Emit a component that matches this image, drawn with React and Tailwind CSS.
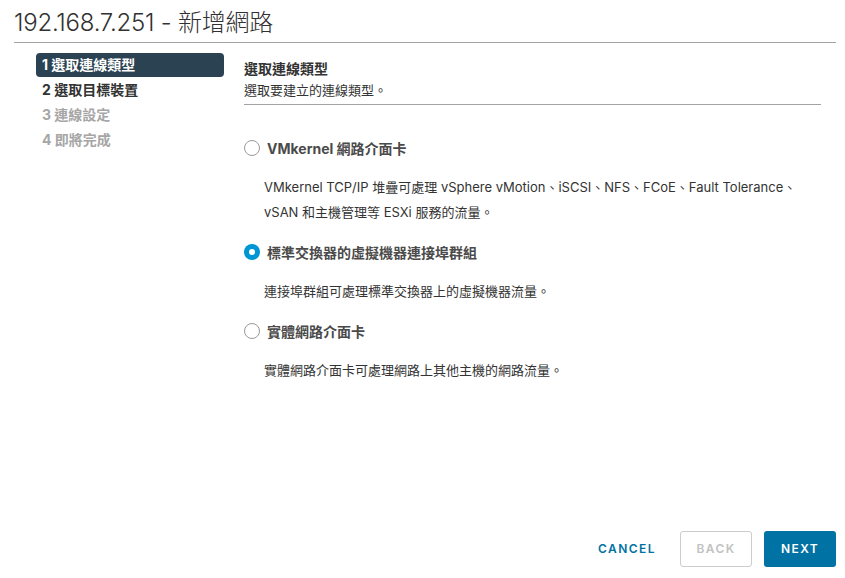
import { useState } from "react";

const font = { fontFamily: '"Inter", "Noto Sans CJK TC", sans-serif' };

const steps = [
  { label: "1 選取連線類型", state: "active" },
  { label: "2 選取目標裝置", state: "next" },
  { label: "3 連線設定", state: "disabled" },
  { label: "4 即將完成", state: "disabled" },
];

const options = [
  {
    id: "vmkernel",
    label: "VMkernel 網路介面卡",
    desc: [
      "VMkernel TCP/IP 堆疊可處理 vSphere vMotion、iSCSI、NFS、FCoE、Fault Tolerance、",
      "vSAN 和主機管理等 ESXi 服務的流量。",
    ],
  },
  {
    id: "portgroup",
    label: "標準交換器的虛擬機器連接埠群組",
    desc: ["連接埠群組可處理標準交換器上的虛擬機器流量。"],
  },
  {
    id: "pnic",
    label: "實體網路介面卡",
    desc: ["實體網路介面卡可處理網路上其他主機的網路流量。"],
  },
];

function Radio({ checked }) {
  if (checked) {
    return (
      <span className="flex h-4 w-4 shrink-0 items-center justify-center rounded-full bg-[#0095d3]">
        <span className="h-[6px] w-[6px] rounded-full bg-white" />
      </span>
    );
  }
  return <span className="h-4 w-4 shrink-0 rounded-full border border-[#9a9a9a] bg-white" />;
}

export default function App() {
  const [selected, setSelected] = useState("portgroup");

  return (
    <div className="flex h-[578px] w-full flex-col bg-white text-[#333]" style={font}>
      <div className="pl-[14px] pr-[9px]">
        <h1 className="border-b border-[#a3a3a3] pt-[8px] pb-[5px] text-[24px] font-light leading-[29px] tracking-[-0.01em] text-[#313131]">
          192.168.7.251 - 新增網路
        </h1>
      </div>

      <div className="flex flex-1 pl-[36px] pt-[10px]">
        <nav className="flex w-[188px] shrink-0 flex-col gap-px">
          {steps.map((s) => (
            <div
              key={s.label}
              className={
                s.state === "active"
                  ? "h-6 rounded-[4px] bg-[#2b4252] pl-[6px] text-[14px] font-bold leading-6 text-white"
                  : s.state === "next"
                  ? "h-6 pl-[6px] text-[14px] font-bold leading-6 text-[#333]"
                  : "h-6 pl-[6px] text-[14px] font-bold leading-6 text-[#a6a6a6]"
              }
            >
              {s.label}
            </div>
          ))}
        </nav>

        <main className="ml-5 w-[577px]">
          <div className="border-b border-[#a3a3a3] pt-[6px] pb-[4px]">
            <div className="text-[14px] font-bold leading-5 text-[#333]">選取連線類型</div>
            <div className="mt-px text-[13px] leading-5 text-[#333]">選取要建立的連線類型。</div>
          </div>

          <div className="pt-[33px]">
            {options.map((o, i) => (
              <div key={o.id} className={i === 0 ? "" : "mt-[17px]"}>
                <label
                  className="flex h-5 cursor-pointer items-center gap-[7px]"
                  onClick={() => setSelected(o.id)}
                >
                  <Radio checked={selected === o.id} />
                  <span className="text-[14px] font-bold text-[#4a4a4a]">{o.label}</span>
                </label>
                <div className="mt-[17px] pl-5 text-[13px] leading-[25px] text-[#333]">
                  {o.desc.map((d) => (
                    <div key={d}>{d}</div>
                  ))}
                </div>
              </div>
            ))}
          </div>
        </main>
      </div>

      <div className="flex items-center justify-end gap-3 pr-[9px] pb-[11px]">
        <button className="h-9 px-3 text-[12px] font-semibold tracking-[0.12em] text-[#0072a3]">
          CANCEL
        </button>
        <button
          disabled
          className="h-9 w-[72px] rounded-[3px] border border-[#cccccc] text-[12px] font-semibold tracking-[0.12em] text-[#c2c2c2]"
        >
          BACK
        </button>
        <button className="h-9 w-[72px] rounded-[3px] bg-[#0072a3] text-[12px] font-semibold tracking-[0.12em] text-white">
          NEXT
        </button>
      </div>
    </div>
  );
}
